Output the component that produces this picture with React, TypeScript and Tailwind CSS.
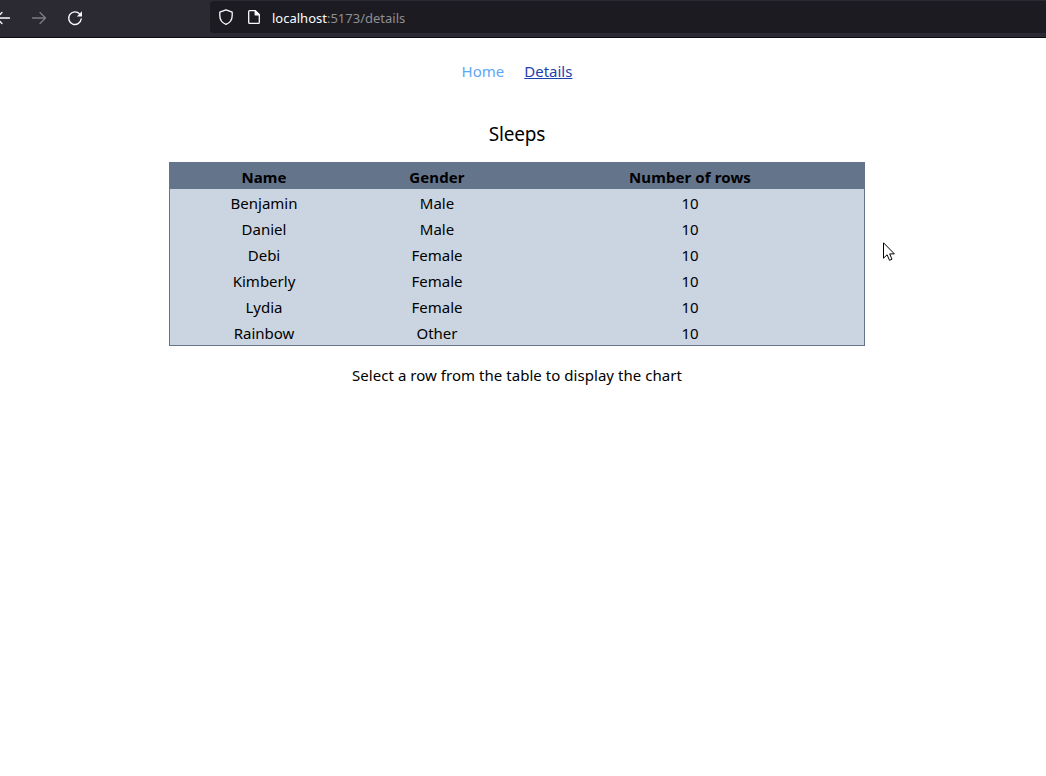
const people = [
  { name: 'Benjamin', gender: 'Male', rows: 10 },
  { name: 'Daniel', gender: 'Male', rows: 10 },
  { name: 'Debi', gender: 'Female', rows: 10 },
  { name: 'Kimberly', gender: 'Female', rows: 10 },
  { name: 'Lydia', gender: 'Female', rows: 10 },
  { name: 'Rainbow', gender: 'Other', rows: 10 },
];

function BrowserBar() {
  return (
    <header className="flex h-[38px] items-start overflow-hidden border-b border-[#0c0c0d] bg-[#2b2a33]">
      <div className="flex h-[35px] w-[210px] shrink-0 items-center text-[#fbfbfe]">
        <svg className="-ml-[5px] size-4" viewBox="0 0 16 16" fill="none" stroke="currentColor" strokeWidth="1.3" strokeLinecap="round" strokeLinejoin="round">
          <path d="M14.5 8H1.5M7 2.5L1.5 8L7 13.5" />
        </svg>
        <svg className="ml-5 size-4 text-[#7d7c83]" viewBox="0 0 16 16" fill="none" stroke="currentColor" strokeWidth="1.3" strokeLinecap="round" strokeLinejoin="round">
          <path d="M1.5 8H14.5M9 2.5L14.5 8L9 13.5" />
        </svg>
        <svg className="ml-5 size-4" viewBox="0 0 16 16" fill="none" stroke="currentColor" strokeWidth="1.4" strokeLinecap="round">
          <path d="M12.6 3.9A6.3 6.3 0 1 0 14.2 9" />
          <path d="M15 1.2V6.4H9.8Z" fill="currentColor" stroke="none" />
        </svg>
      </div>
      <div className="mt-px flex h-8 flex-1 items-center rounded-l bg-[#1c1b22] pl-2 text-[#fbfbfe]">
        <svg className="size-4" viewBox="0 0 16 16" fill="none" stroke="currentColor" strokeWidth="1.3" strokeLinejoin="round">
          <path d="M8 .8L14.2 3.2V6.5C14.2 10.5 12 13.8 8 15.4C4 13.8 1.8 10.5 1.8 6.5V3.2Z" />
        </svg>
        <svg className="ml-3 size-4" viewBox="0 0 16 16" fill="none" stroke="currentColor" strokeWidth="1.3" strokeLinejoin="round">
          <path d="M3.6 1.7H9.2L13.3 5.8V13.4A.9.9 0 0 1 12.4 14.3H3.6A.9.9 0 0 1 2.7 13.4V2.6A.9.9 0 0 1 3.6 1.7Z" />
          <path d="M9.2 1.7V5.8H13.3Z" fill="currentColor" />
        </svg>
        <span className="ml-[10px] pt-1 font-['Noto_Sans',sans-serif] text-[13px] whitespace-nowrap">
          localhost<span className="text-[#8f8f94]">:5173/details</span>
        </span>
      </div>
    </header>
  );
}

export default function App() {
  return (
    <div className="relative h-screen overflow-hidden bg-white font-['Noto_Sans',sans-serif] text-[15px] text-black">
      <BrowserBar />
      <main className="flex w-[1034px] flex-col items-center">
        <nav className="mt-[21px] flex h-6 items-center gap-5">
          <a className="text-[#60a5fa]">Home</a>
          <a className="text-[#1e40af] underline">Details</a>
        </nav>
        <h1 className="mt-[37px] h-7 text-[19px] leading-7 tracking-[-0.15px]">Sleeps</h1>
        <table className="mt-[14px] w-[696px] table-fixed border-separate border-spacing-0 border border-[#64748b] bg-[#cbd5e1] text-center leading-6">
          <colgroup>
            <col className="w-[188px]" />
            <col className="w-[158px]" />
            <col className="w-[348px]" />
          </colgroup>
          <thead className="bg-[#64748b] font-bold tracking-[0.1px]">
            <tr className="h-[26px]">
              <th className="p-0 pt-[2px]">Name</th>
              <th className="p-0 pt-[2px]">Gender</th>
              <th className="p-0 pt-[2px]">Number of rows</th>
            </tr>
          </thead>
          <tbody>
            {people.map((person) => (
              <tr key={person.name} className="h-[26px]">
                <td className="p-0 pt-[2px]">{person.name}</td>
                <td className="p-0 pt-[2px]">{person.gender}</td>
                <td className="p-0 pt-[2px]">{person.rows}</td>
              </tr>
            ))}
          </tbody>
        </table>
        <p className="mt-[17px] leading-6 tracking-[0.04px]">Select a row from the table to display the chart</p>
      </main>
      <svg className="absolute top-[242px] left-[883px] h-5 w-3" viewBox="0 0 12 20" fill="white" stroke="black" strokeWidth="1">
        <path d="M.5 .8V16.2L4.1 12.8L6.5 18.3L9 17.2L6.7 11.9H11.4Z" />
      </svg>
    </div>
  );
}
